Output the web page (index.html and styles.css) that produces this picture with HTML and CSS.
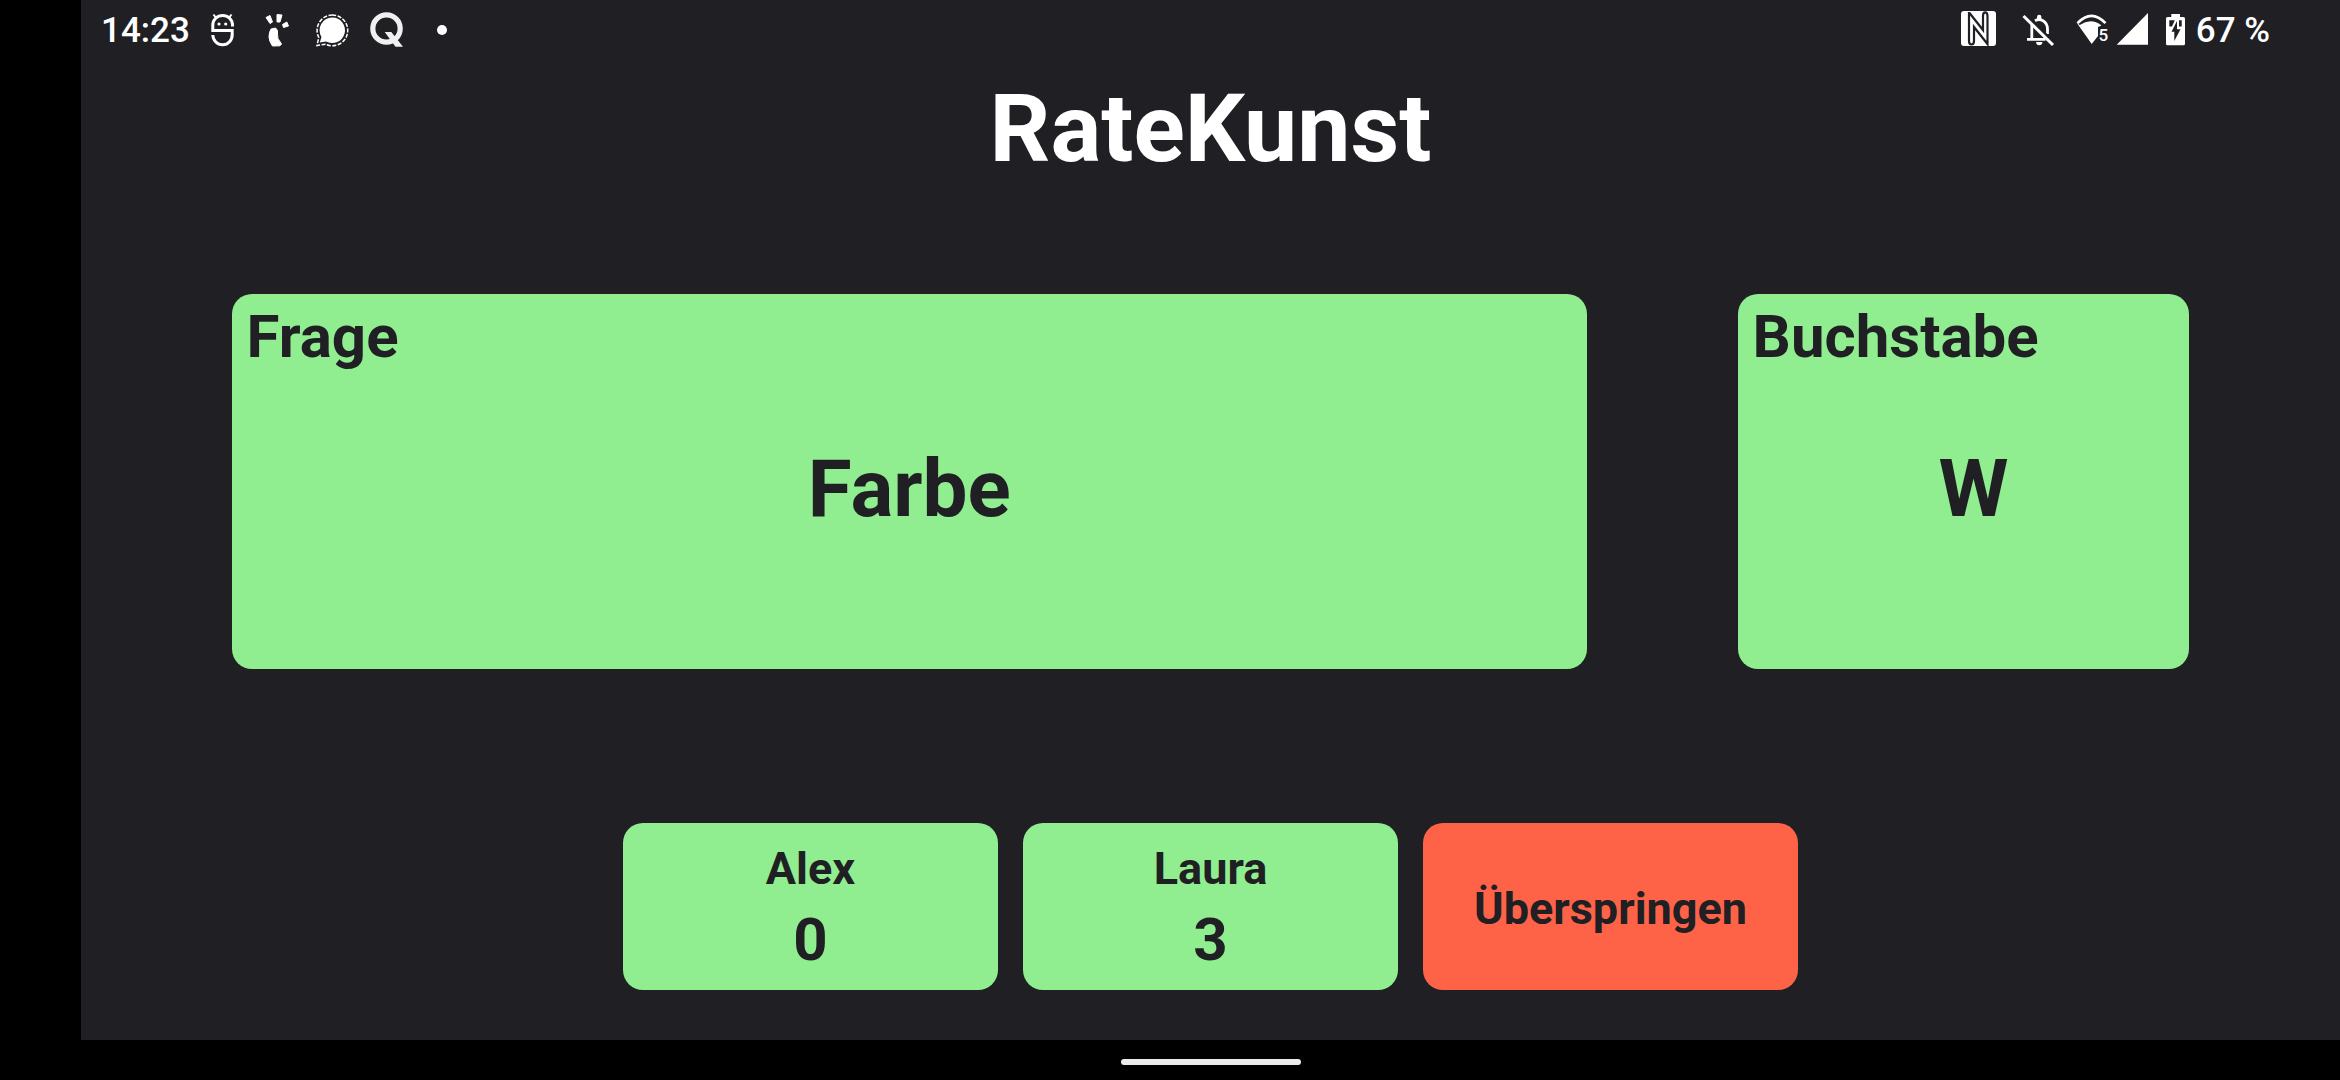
FILE: index.html
```html
<!DOCTYPE html>
<html lang="de">
<head>
<meta charset="utf-8">
<meta name="viewport" content="width=device-width, initial-scale=1">
<title>RateKunst</title>
<link rel="stylesheet" href="styles.css">
</head>
<body>
<div class="app">
  <header class="status">
    <div class="status-group">
      <time class="clock">14:23</time>
      <svg class="icon" width="55" height="60" viewBox="0 0 55 60" aria-hidden="true">
        <g fill="none" stroke="currentColor" stroke-width="3">
          <path d="M37.500 26.500V25A9.800 9.500 0 0 0 17.800 25V30.500H37.200V34.500A9.700 10 0 0 1 17.800 35"/>
          <path d="M18.500 14.500l3 4M36.500 14.500l-3 4" stroke-width="2"/>
        </g>
        <circle cx="24" cy="24" r="1.600" fill="currentColor"/><circle cx="30.700" cy="24" r="1.600" fill="currentColor"/>
      </svg>
      <svg class="icon" width="55" height="60" viewBox="0 0 55 60" aria-hidden="true">
        <path fill="currentColor" stroke="currentColor" stroke-width="1" stroke-linejoin="round" d="M16 17.500L20 15.500L22.500 22L20 23.500ZM27 14.500L32 15L30 22H27ZM32.500 24.500L36.800 22L38.500 26L33.500 27.500ZM21 29L25.500 28Q28.500 30 27.500 34Q26.500 38 31.500 44L30 45.800L22.500 46Q19 41 19 37Q19 32 21 29Z"/>
      </svg>
      <svg class="icon" width="55" height="60" viewBox="0 0 55 60" aria-hidden="true">
        <path fill="currentColor" d="M27.300 17.500A12.800 12.800 0 1 1 21 41.500L14.800 42.500L16.500 37A12.800 12.800 0 0 1 27.300 17.500Z"/>
        <path fill="none" stroke="currentColor" stroke-width="1.500" stroke-dasharray="4 1.500" d="M27.300 15A15.400 15.400 0 1 1 20.500 44.200L12 45.500L13.800 37.500A15.400 15.400 0 0 1 27.300 15Z"/>
      </svg>
      <svg class="icon soft" width="55" height="60" viewBox="0 0 55 60" aria-hidden="true">
        <circle cx="26.500" cy="28.500" r="13.700" fill="none" stroke="currentColor" stroke-width="5.200"/>
        <path fill="currentColor" d="M24.700 32H31.300L43 46.700H35.500Z"/>
      </svg>
      <svg class="icon" width="55" height="60" viewBox="0 0 55 60" aria-hidden="true">
        <circle cx="27" cy="30" r="5" fill="currentColor"/>
      </svg>
    </div>
    <div class="status-group">
      <svg class="icon" width="60" height="60" viewBox="0 0 60 60" aria-hidden="true">
        <rect x="11" y="11" width="35" height="35" rx="3" fill="currentColor"/>
        <path class="cut" fill="none" stroke-width="2.200" d="M19 12V41Q19 44.500 21.500 44.500Q24 44.500 24 41V27L37.500 44V16Q37.500 12.300 35.200 12.300Q33 12.300 33 16V30L19.500 13"/>
      </svg>
      <svg class="icon" width="60" height="60" viewBox="0 0 60 60" aria-hidden="true">
        <g fill="none" stroke="currentColor" stroke-width="2.800">
          <path d="M21.800 25V39.300M17 39.300H35.500M25 20.800Q29 18.500 33 20.800Q37.500 23.500 37.500 29V34"/>
        </g>
        <path fill="currentColor" d="M27 20V17Q27 14.700 29.200 14.700T31.400 17V20ZM26 42H32.500Q32 45.300 29.200 45.300T26 42Z"/>
        <path class="cut" stroke-width="3" d="M15 14.500L45 43.500"/>
        <path stroke="currentColor" stroke-width="3" d="M13.500 16L43 45"/>
      </svg>
      <svg class="icon" width="40" height="60" viewBox="0 0 40 60" aria-hidden="true">
        <path fill="none" stroke="currentColor" stroke-width="2.600" d="M7.500 23.200Q21.500 8.500 35.500 23.200"/>
        <path fill="currentColor" d="M6.700 22.700L9.800 25Q21 17.500 31.500 25.500L28 27V36L21.700 44Z"/>
        <text x="28.500" y="40.700" class="wifi-band">5</text>
      </svg>
      <svg class="icon" width="45" height="60" viewBox="0 0 45 60" aria-hidden="true">
        <path fill="currentColor" d="M6.700 44.700H38V13Z"/>
      </svg>
      <svg class="icon" width="36" height="60" viewBox="0 0 36 60" aria-hidden="true">
        <path fill="currentColor" d="M16.300 17V14H25V17H28.500Q30 17 30 18.500V43.800Q30 45.300 28.500 45.300H12.500Q11 45.300 11 43.800V18.500Q11 17 12.500 17Z"/>
        <path class="cut-fill" d="M14.300 20.300H19.800L17 26.500H14.300ZM24 20.300H26.700V26.500H24Z"/>
        <path class="cut-fill" d="M22 21V29.300H25.500L19.300 41V31.800H16.500Z"/>
      </svg>
      <span class="charge">67 %</span>
    </div>
  </header>

  <main class="game">
    <h1 class="title">RateKunst</h1>
    <div class="board">
      <section class="card question">
        <h2 class="card-label">Frage</h2>
        <p class="card-value">Farbe</p>
      </section>
      <section class="card letter">
        <h2 class="card-label">Buchstabe</h2>
        <p class="card-value">&nbsp;W</p>
      </section>
    </div>
    <div class="actions">
      <button class="tile" type="button"><span>Alex</span><span class="score">0</span></button>
      <button class="tile" type="button"><span>Laura</span><span class="score">3</span></button>
      <button class="tile skip" type="button">Überspringen</button>
    </div>
  </main>
</div>
<footer class="nav"><div class="handle"></div></footer>
</body>
</html>
```
FILE: styles.css
```css
:root {
  --surface: #201f24;
  --green: #90ee90;
  --red: #ff6347;
}

* {
  box-sizing: border-box;
}

body {
  margin: 0;
  min-height: 100vh;
  padding-left: 81px;
  display: flex;
  flex-direction: column;
  background: #000;
  font-family: Roboto, sans-serif;
}

.app {
  flex: 1;
  display: flex;
  flex-direction: column;
  background: var(--surface);
  color: #fff;
}

.status {
  height: 60px;
  padding: 0 70px 0 20px;
  display: flex;
  justify-content: space-between;
}

.status-group {
  display: flex;
  align-items: center;
}

.clock,
.charge {
  font-size: 35px;
  font-weight: 500;
  line-height: 58px;
  padding-top: 2px;
  white-space: nowrap;
}

.clock {
  margin-right: 5px;
}

.charge {
  margin-left: 5px;
}

.icon {
  flex: none;
  display: block;
}

.soft {
  color: #f0f0f0;
}

.cut {
  stroke: var(--surface);
}

.cut-fill {
  fill: var(--surface);
}

.wifi-band {
  fill: currentColor;
  font-size: 17px;
  font-weight: 500;
}

.game {
  flex: 1;
  padding: 13px 0 50px;
  display: flex;
  flex-direction: column;
}

.title {
  margin: 0;
  font-size: 95px;
  font-weight: 700;
  line-height: 112px;
  text-align: center;
}

.board {
  flex: 1;
  display: grid;
  grid-template-columns: 1fr 9fr 1fr 3fr 1fr;
  align-items: center;
}

.card {
  min-height: 375px;
  padding: 15px 15px 0;
  display: grid;
  grid-template-rows: 56px 1fr 56px;
  border-radius: 20px;
  background: var(--green);
  color: var(--surface);
}

.question {
  grid-column: 2;
}

.letter {
  grid-column: 4;
}

.card-label {
  margin: 0;
  font-size: 60px;
  font-weight: 700;
  line-height: 56px;
}

.card-value {
  margin: 0;
  align-self: center;
  font-size: 80px;
  font-weight: 700;
  line-height: 94px;
  text-align: center;
}

.actions {
  padding-top: 45px;
  display: flex;
  justify-content: center;
  gap: 25px;
}

.tile {
  width: 375px;
  min-height: 167px;
  padding: 4px 0 0;
  display: flex;
  flex-direction: column;
  align-items: center;
  justify-content: center;
  gap: 10px;
  border: 0;
  border-radius: 20px;
  background: var(--green);
  color: var(--surface);
  font-family: inherit;
  font-size: 45px;
  font-weight: 700;
  line-height: 53px;
}

.score {
  font-size: 60px;
  line-height: 70px;
}

.skip {
  background: var(--red);
}

.nav {
  height: 40px;
  display: flex;
  align-items: center;
  justify-content: center;
}

.handle {
  width: 180px;
  height: 6px;
  margin-top: 4px;
  border-radius: 3px;
  background: #ebebeb;
}
```
